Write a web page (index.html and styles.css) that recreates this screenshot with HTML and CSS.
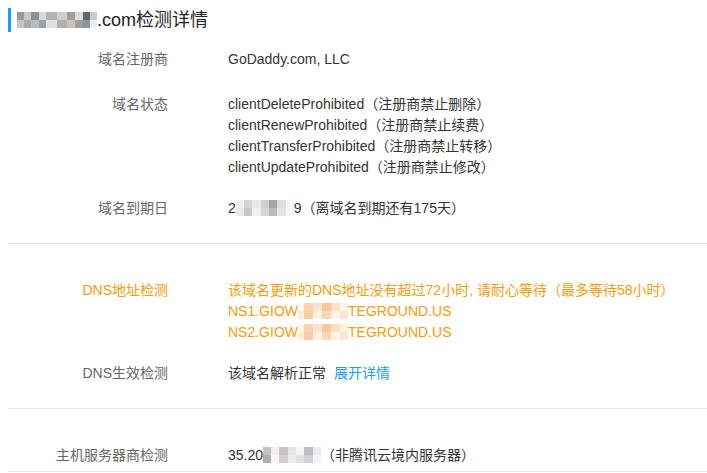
FILE: index.html
```html
<!DOCTYPE html>
<html lang="zh-CN">
<head>
    <meta charset="UTF-8">
    <meta name="viewport" content="width=device-width, initial-scale=1.0">
    <title>域名检测详情</title>
    <link rel="stylesheet" href="styles.css">
</head>
<body>
    <div class="report">
        <h2 class="title"><span class="mosaic mosaic-title"></span>.com检测详情</h2>

        <!-- Domain info -->
        <div class="section">
            <div class="row">
                <div class="label">域名注册商</div>
                <div class="value">GoDaddy.com, LLC</div>
            </div>
            <div class="row row-status">
                <div class="label">域名状态</div>
                <div class="value">
                    <p>clientDeleteProhibited（注册商禁止删除）</p>
                    <p>clientRenewProhibited（注册商禁止续费）</p>
                    <p>clientTransferProhibited（注册商禁止转移）</p>
                    <p>clientUpdateProhibited（注册商禁止修改）</p>
                </div>
            </div>
            <div class="row">
                <div class="label">域名到期日</div>
                <div class="value">2<span class="mosaic mosaic-date"></span>9（离域名到期还有175天）</div>
            </div>
        </div>

        <!-- DNS checks -->
        <div class="section">
            <div class="row warn">
                <div class="label">DNS地址检测</div>
                <div class="value">
                    <p>该域名更新的DNS地址没有超过72小时, 请耐心等待（最多等待58小时）</p>
                    <p>NS1.GIOW<span class="mosaic mosaic-ns"></span>TEGROUND.US</p>
                    <p>NS2.GIOW<span class="mosaic mosaic-ns"></span>TEGROUND.US</p>
                </div>
            </div>
            <div class="row">
                <div class="label">DNS生效检测</div>
                <div class="value">该域名解析正常 <a class="more" href="#">展开详情</a></div>
            </div>
        </div>

        <!-- Host -->
        <div class="section section-last">
            <div class="row">
                <div class="label">主机服务器商检测</div>
                <div class="value">35.20<span class="mosaic mosaic-ip"></span>（非腾讯云境内服务器）</div>
            </div>
        </div>
    </div>
</body>
</html>
```

FILE: styles.css
```css
/* Global Styles */
body {
    font-family: 'Liberation Sans', Arial, 'Noto Sans CJK SC', sans-serif;
    font-size: 14px;
    color: #333;
    background: #fff;
    margin: 8px 0 0 8px;
    overflow: hidden;
}

p {
    margin: 0;
}

.title {
    margin: 0;
    height: 24px;
    line-height: 24px;
    font-size: 18px;
    font-weight: normal;
    color: #222;
    border-left: 3px solid #1e9fff;
    padding-left: 6px;
}

.section {
    padding: 7px 0 14px;
    border-bottom: 1px solid #e6e6e6;
}

.section + .section {
    padding-top: 26px;
}

.section-last {
    padding-bottom: 0;
}

.section-last .row {
    padding-bottom: 5px;
}

.row {
    display: flex;
    padding: 10px 0;
    line-height: 21px;
}

.row-status {
    padding-top: 14px;
}

.label {
    width: 160px;
    flex-shrink: 0;
    text-align: right;
    color: #666;
}

.value {
    margin-left: 60px;
    white-space: nowrap;
}

.warn .label,
.warn .value {
    color: #fa9a0a;
}

.more {
    color: #1a9dff;
    text-decoration: none;
    margin-left: 4px;
}

/* Redacted parts */
.mosaic {
    display: inline-block;
    vertical-align: -3px;
    height: 16px;
}

.mosaic-title {
    width: 80px;
    vertical-align: -2px;
    background:
        linear-gradient(90deg, #9a9a9a 0 9%, #c8c8c8 9% 18%, #8c8f99 18% 27%, #d9d9d9 27% 36%, #b4b4b8 36% 50%, #cfcfcf 50% 62%, #a29a94 62% 72%, #dcdcdc 72% 82%, #5f6670 82% 91%, #c9c9c9 91%) top / 100% 50% no-repeat,
        linear-gradient(90deg, #c4c4c4 0 9%, #a9a9a9 9% 18%, #b9bcc4 18% 27%, #9da0a8 27% 36%, #e0e0e0 36% 50%, #b0b0b0 50% 62%, #c9c3bd 62% 72%, #9f9f9f 72% 82%, #8a929c 82% 91%, #eeeeee 91%) bottom / 100% 50% no-repeat;
}

.mosaic-date {
    width: 58px;
    background:
        linear-gradient(90deg, #f1f1f1 0 14%, #d8d3da 14% 28%, #e6e6e6 28% 43%, #cfcfd4 43% 57%, #a8a4a8 57% 71%, #dedede 71% 86%, #f4f4f4 86%) top / 100% 50% no-repeat,
        linear-gradient(90deg, #e8e8e8 0 14%, #cbc6cd 14% 28%, #f0f0f0 28% 43%, #d6d6db 43% 57%, #bdb9bd 57% 71%, #e4e4e4 71% 86%, #f8f8f8 86%) bottom / 100% 50% no-repeat;
}

.mosaic-ns {
    width: 50px;
    background:
        linear-gradient(90deg, #fff6ee 0 12%, #fcd3b0 12% 30%, #fde3cc 30% 48%, #fbc89d 48% 66%, #fde0c6 66% 84%, #fff1e4 84%) top / 100% 50% no-repeat,
        linear-gradient(90deg, #fdebdc 0 12%, #fbcba4 12% 30%, #fff0e2 30% 48%, #fcd7b6 48% 66%, #fef3ea 66% 84%, #fce6d2 84%) bottom / 100% 50% no-repeat;
}

.mosaic-ip {
    width: 58px;
    background:
        linear-gradient(90deg, #c6c0c0 0 14%, #f0f0f0 14% 28%, #c9c4c4 28% 43%, #e4e4e4 43% 57%, #f5f5f5 57% 71%, #bebec6 71% 86%, #ececf0 86%) top / 100% 50% no-repeat,
        linear-gradient(90deg, #b4aeae 0 14%, #f6f6f6 14% 28%, #d2cece 28% 43%, #ececec 43% 57%, #e2e2e2 57% 71%, #cfcfd6 71% 86%, #f4f4f8 86%) bottom / 100% 50% no-repeat;
}
```
